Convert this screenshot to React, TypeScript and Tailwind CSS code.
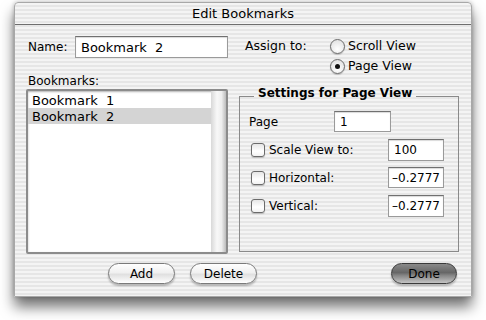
import React from "react";

const stripes =
  "bg-[repeating-linear-gradient(180deg,#f4f4f4_0px,#f4f4f4_2px,#e6e6e6_2px,#e6e6e6_4px)]";

function Field({ value, className }: { value: string; className: string }) {
  return (
    <div
      className={`bg-white border border-[#9a9a9a] border-t-[#707070] shadow-[inset_0_1px_1px_rgba(0,0,0,0.15)] flex items-center pl-[5px] overflow-hidden whitespace-pre ${className}`}
    >
      {value}
    </div>
  );
}

function Check() {
  return (
    <div className="w-[14px] h-[14px] rounded-[3px] border border-[#6b6b6b] bg-[linear-gradient(180deg,#e6e6e6,#ffffff_60%,#f2f2f2)] shadow-[0_1px_1px_rgba(0,0,0,0.2)]" />
  );
}

function Radio({ on }: { on?: boolean }) {
  return (
    <div className="w-[15px] h-[15px] rounded-full border border-[#6b6b6b] bg-[radial-gradient(circle_at_50%_70%,#ffffff,#dcdcdc)] flex items-center justify-center shadow-[0_1px_1px_rgba(0,0,0,0.2)]">
      {on && <div className="w-[5px] h-[5px] rounded-full bg-[#111]" />}
    </div>
  );
}

function Btn({ label, dark, className }: { label: string; dark?: boolean; className: string }) {
  return (
    <div
      className={`h-[21px] rounded-full flex items-center justify-center border shadow-[0_2px_2px_rgba(0,0,0,0.25)] ${
        dark
          ? "border-[#3a3a3a] bg-[linear-gradient(180deg,#8a8a8a_0%,#666666_45%,#858585_60%,#c4c4c4_100%)]"
          : "border-[#7a7a7a] bg-[linear-gradient(180deg,#ffffff_0%,#f0f0f0_45%,#e0e0e0_55%,#ffffff_100%)]"
      } ${className}`}
    >
      {label}
    </div>
  );
}

export default function App() {
  return (
    <div className="w-[486px] h-[320px] bg-white overflow-hidden pt-[2px] pl-[14px] text-[12px] text-black leading-none [font-family:'DejaVu_Sans',sans-serif]">
      <div
        className={`w-[458px] h-[295px] border border-[#a8a8a8] rounded-t-[4px] flex flex-col shadow-[0_10px_14px_rgba(0,0,0,0.55),0_0_4px_rgba(0,0,0,0.25)] ${stripes}`}
      >
        {/* title bar */}
        <div className="h-[22px] border-b border-[#6e6e6e] flex items-center justify-center text-[13px]">
          Edit Bookmarks
        </div>

        <div className="flex pl-[11px] pt-[11px]">
          {/* left column */}
          <div className="w-[202px] flex flex-col">
            <div className="flex items-center h-[22px]">
              <span className="ml-[2px] w-[47px]">Name:</span>
              <Field value="Bookmark  2" className="w-[153px] h-[22px] text-[13px]" />
            </div>
            <div className="mt-[17px] ml-[2px] h-[14px]">Bookmarks:</div>
            <div className="mt-0 w-[202px] h-[165px] rounded-[2px] border-[2px] border-[#8c8c8c] shadow-[inset_0_1px_2px_rgba(0,0,0,0.3)] bg-white flex">
              <div className="flex-1 flex flex-col pt-[1px]">
                <div className="h-[16px] pl-[4px] flex items-center whitespace-pre text-[13px]">Bookmark  1</div>
                <div className="h-[16px] pl-[4px] flex items-center whitespace-pre bg-[#d4d4d4] text-[13px]">Bookmark  2</div>
              </div>
              <div className="w-[15px] h-full bg-[linear-gradient(90deg,#d8d8d8,#f8f8f8_40%,#eeeeee_70%,#bcbcbc)]" />
            </div>
          </div>

          {/* right column */}
          <div className="ml-[11px] w-[220px] flex flex-col">
            <div className="flex items-start">
              <span className="ml-[6px] w-[85px] mt-[4px] text-[12.5px]">Assign to:</span>
              <div className="flex flex-col gap-[5px] mt-[3px]">
                <div className="flex items-center gap-[3px]">
                  <Radio />
                  <span className="text-[12.5px]">Scroll View</span>
                </div>
                <div className="flex items-center gap-[3px]">
                  <Radio on />
                  <span className="text-[12.5px]">Page View</span>
                </div>
              </div>
            </div>

            <div className="relative mt-[22px] h-[156px] border border-[#8a8a8a]">
              <div className={`absolute -top-[10px] left-[14px] px-[4px] font-bold ${stripes}`}>
                Settings for Page View
              </div>
              <div className="flex flex-col pl-[9px] pt-[14px]">
                <div className="flex items-center h-[21px]">
                  <span className="w-[85px]">Page</span>
                  <Field value="1" className="w-[57px] h-[21px]" />
                </div>
                <div className="flex items-center h-[22px] mt-[7px]">
                  <div className="ml-[2px]"><Check /></div>
                  <span className="ml-[4px] w-[119px]">Scale View to:</span>
                  <Field value="100" className="w-[56px] h-[22px]" />
                </div>
                <div className="flex items-center h-[21px] mt-[6px]">
                  <div className="ml-[2px]"><Check /></div>
                  <span className="ml-[4px] w-[119px]">Horizontal:</span>
                  <Field value="–0.2777" className="w-[56px] h-[21px] !pl-[3px]" />
                </div>
                <div className="flex items-center h-[22px] mt-[7px]">
                  <div className="ml-[2px]"><Check /></div>
                  <span className="ml-[4px] w-[119px]">Vertical:</span>
                  <Field value="–0.2777" className="w-[56px] h-[22px] !pl-[3px]" />
                </div>
              </div>
            </div>
          </div>
        </div>

        {/* buttons */}
        <div className="flex mt-[9px]">
          <Btn label="Add" className="ml-[93px] w-[67px]" />
          <Btn label="Delete" className="ml-[15px] w-[67px]" />
          <Btn label="Done" dark className="ml-[134px] w-[66px]" />
        </div>
      </div>
    </div>
  );
}
